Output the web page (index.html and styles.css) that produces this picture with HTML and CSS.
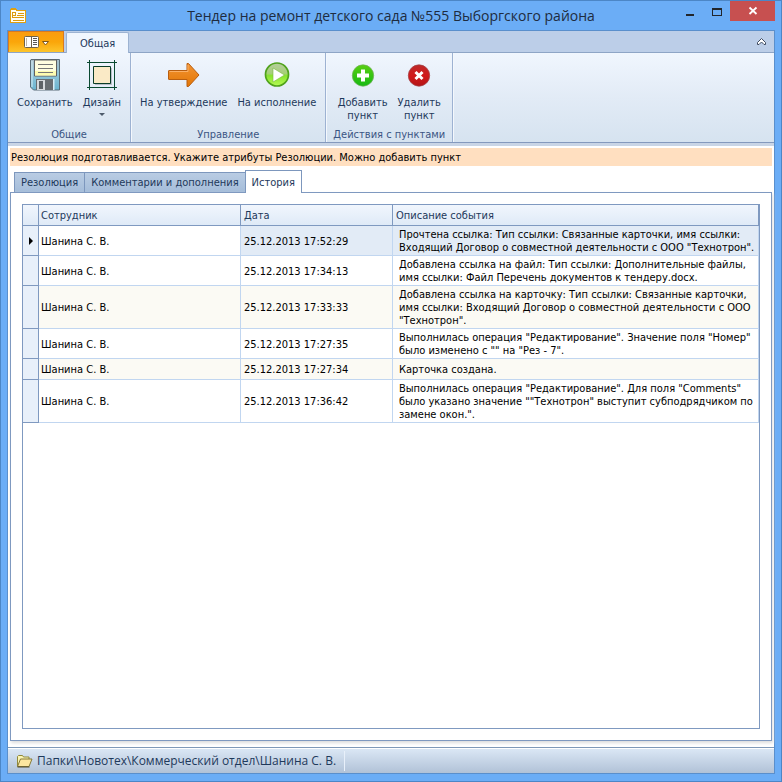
FILE: index.html
```html
<!DOCTYPE html>
<html lang="ru">
<head>
<meta charset="utf-8">
<title>Тендер на ремонт детского сада №555 Выборгского района</title>
<link rel="stylesheet" href="styles.css">
</head>
<body>
<div class="window">
  <header class="titlebar">
    <svg class="app-icon" width="16" height="16" viewBox="0 0 16 16" aria-hidden="true">
      <path d="M0 1h1V0h5v1h1v1h9v13H0z" fill="#dfa010"/>
      <path d="M1 2h5v1h9v11H1z" fill="#fffdf2"/>
      <path d="M2 4h4v4H3v2H2zM3 5v2h2V5zM8 5h6v1H8zM7 7h7v1H7zM3 9h11v1H3zM3 12h11v1H3z" fill="#dd9a0c" fill-rule="evenodd"/>
    </svg>
    <h1 class="title">Тендер на ремонт детского сада №555 Выборгского района</h1>
    <div class="window-buttons">
      <button class="win-btn" type="button" aria-label="Свернуть"><svg width="12" height="12" viewBox="0 0 12 12"><path d="M2 9h8v2H2z" fill="#22262c"/></svg></button>
      <button class="win-btn" type="button" aria-label="Развернуть"><svg width="12" height="12" viewBox="0 0 12 12"><path d="M1 3h10v8H1zM2 5v5h8V5z" fill="#22262c" fill-rule="evenodd"/></svg></button>
      <button class="win-btn win-close" type="button" aria-label="Закрыть"><svg width="12" height="12" viewBox="0 0 12 12"><path d="M2.500 2.500l7 6.500M9.500 2.500l-7 6.500" stroke="#fff" stroke-width="1.800"/></svg></button>
    </div>
  </header>

  <div class="client">
    <nav class="ribbon-tabs">
      <button class="app-menu" type="button" aria-label="Меню">
        <svg width="26" height="14" viewBox="0 0 26 14">
          <rect x="1.500" y="1.500" width="14" height="11" rx="1" fill="#fff" stroke="#6d624c"/>
          <path d="M8.500 2v10" stroke="#6d624c"/>
          <path d="M3 3h1v8H3z" fill="#bdb7aa"/>
          <path d="M10 3.500h4M10 5.500h4M10 7.500h4M10 9.500h4" stroke="#555"/>
          <path d="M19.500 6.500h6l-3 3.500z" fill="#fff" stroke="#80591a"/>
        </svg>
      </button>
      <button class="ribbon-tab" type="button">Общая</button>
      <button class="collapse" type="button" aria-label="Свернуть ленту">
        <svg width="11" height="10" viewBox="0 0 11 10"><path d="M5.500 1.500l4 4v2H8L5.500 5 3 7.500H1.500v-2z" fill="#fff" stroke="#3f4b60"/></svg>
      </button>
    </nav>

    <div class="ribbon">
      <section class="group">
        <div class="group-items">
          <button class="tool" type="button">
            <svg width="32" height="32" viewBox="0 0 32 32">
              <defs><linearGradient id="disk" x2="0" y2="1"><stop stop-color="#a9bdc9"/><stop offset=".5" stop-color="#8fc4d9"/><stop offset="1" stop-color="#6bb5d0"/></linearGradient></defs>
              <path d="M2 .5h28.500V31H4.500L1.500 28V1z" fill="url(#disk)" stroke="#5b6d78"/>
              <path d="M3 2v26" stroke="#d7eef6"/>
              <path d="M5.500 1h22v16h-22z" fill="#fffde0" stroke="#606060"/>
              <path d="M6 12h21v4.500H6z" fill="#fdfbb0"/>
              <path d="M9 5.500h15M9 9.500h15M9 13.500h15" stroke="#777"/>
              <path d="M7 20h17v11H7z" fill="#686e72"/>
              <path d="M8 21h8v10H8z" fill="#d5d9dc"/><path d="M10 22h4v8h-4z" fill="#5d6266"/>
              <path d="M24 20h1.500v11H24z" fill="#d8eef6"/>
            </svg>
            <span>Сохранить</span>
          </button>
          <button class="tool" type="button">
            <svg width="32" height="32" viewBox="0 0 32 32">
              <path d="M3.500 1v30M28.500 1v30M1 3.500h30M1 28.500h30" stroke="#0b4a31"/>
              <path d="M9 9h17v17H9z" fill="#b9bec6"/>
              <path d="M7.500 7.500h17v17h-17z" fill="#faeac6" stroke="#0b3d28"/>
            </svg>
            <span>Дизайн</span>
            <i class="drop"></i>
          </button>
        </div>
        <h2 class="group-title">Общие</h2>
      </section>

      <section class="group">
        <div class="group-items">
          <button class="tool" type="button">
            <svg width="32" height="32" viewBox="0 0 32 32">
              <defs><linearGradient id="arrow" x2="0" y2="1"><stop stop-color="#f39433"/><stop offset="1" stop-color="#e27605"/></linearGradient></defs>
              <path d="M.5 12q0-.5.500-.500h18V4.500h1.500L31 16 20.500 27.500H19v-7H1q-.5 0-.5-.5z" fill="url(#arrow)" stroke="#b85e10"/>
              <path d="M1.500 12.500H20V6" fill="none" stroke="#fbb066"/>
            </svg>
            <span>На утверждение</span>
          </button>
          <button class="tool" type="button">
            <svg width="32" height="32" viewBox="0 0 32 32">
              <defs><linearGradient id="play" x2="0" y2="1"><stop stop-color="#b5cd9c"/><stop offset=".45" stop-color="#a6cf79"/><stop offset=".55" stop-color="#88e32e"/><stop offset="1" stop-color="#b6fa55"/></linearGradient></defs>
              <circle cx="16" cy="15.500" r="11.500" fill="url(#play)" stroke="#4fa21b" stroke-width="1.700"/>
              <path d="M12 9v14l11.500-7z" fill="#fff" stroke="#78b840" stroke-width=".6"/>
            </svg>
            <span>На исполнение</span>
          </button>
        </div>
        <h2 class="group-title">Управление</h2>
      </section>

      <section class="group">
        <div class="group-items">
          <button class="tool" type="button">
            <svg width="32" height="32" viewBox="0 0 32 32">
              <defs><linearGradient id="add" x2="0" y2="1"><stop stop-color="#58cf12"/><stop offset="1" stop-color="#16b914"/></linearGradient></defs>
              <circle cx="16" cy="16.500" r="10.700" fill="url(#add)" stroke="#73ae5a" stroke-width=".7"/>
              <path d="M14 10.500h4v4h4v4h-4v4h-4v-4h-4v-4h4z" fill="#fff"/>
            </svg>
            <span>Добавить<br>пункт</span>
          </button>
          <button class="tool" type="button">
            <svg width="32" height="32" viewBox="0 0 32 32">
              <defs><linearGradient id="del" x2="0" y2="1"><stop stop-color="#bc292a"/><stop offset=".5" stop-color="#d11a1b"/><stop offset="1" stop-color="#b41416"/></linearGradient></defs>
              <circle cx="16" cy="16.500" r="10.700" fill="url(#del)" stroke="#9d4246" stroke-width=".7"/>
              <path d="M12.500 13l7 7M19.500 13l-7 7" stroke="#fff" stroke-width="3"/>
            </svg>
            <span>Удалить<br>пункт</span>
          </button>
        </div>
        <h2 class="group-title">Действия с пунктами</h2>
      </section>
    </div>

    <main class="content">
      <p class="message">Резолюция подготавливается. Укажите атрибуты Резолюции. Можно добавить пункт</p>
      <div class="page-tabs">
        <button class="page-tab" type="button">Резолюция</button>
        <button class="page-tab" type="button">Комментарии и дополнения</button>
        <button class="page-tab active" type="button">История</button>
      </div>
      <div class="panel">
        <div class="grid-box">
          <table class="grid">
            <colgroup><col class="c-mark"><col class="c-name"><col class="c-date"><col></colgroup>
            <thead><tr><th></th><th>Сотрудник</th><th>Дата</th><th>Описание события</th></tr></thead>
            <tbody>
              <tr class="current"><td><i class="marker"></i></td><td>Шанина С. В.</td><td>25.12.2013 17:52:29</td><td>Прочтена ссылка: Тип ссылки: Связанные карточки, имя ссылки:<br>Входящий Договор о совместной деятельности с ООО "Технотрон".</td></tr>
              <tr><td></td><td>Шанина С. В.</td><td>25.12.2013 17:34:13</td><td>Добавлена ссылка на файл: Тип ссылки: Дополнительные файлы,<br>имя ссылки: Файл Перечень документов к тендеру.docx.</td></tr>
              <tr><td></td><td>Шанина С. В.</td><td>25.12.2013 17:33:33</td><td>Добавлена ссылка на карточку: Тип ссылки: Связанные карточки,<br>имя ссылки: Входящий Договор о совместной деятельности с ООО<br>"Технотрон".</td></tr>
              <tr><td></td><td>Шанина С. В.</td><td>25.12.2013 17:27:35</td><td>Выполнилась операция "Редактирование". Значение поля "Номер"<br>было изменено с "" на "Рез - 7".</td></tr>
              <tr class="short"><td></td><td>Шанина С. В.</td><td>25.12.2013 17:27:34</td><td>Карточка создана.</td></tr>
              <tr><td></td><td>Шанина С. В.</td><td>25.12.2013 17:36:42</td><td>Выполнилась операция "Редактирование". Для поля "Comments"<br>было указано значение ""Технотрон" выступит субподрядчиком по<br>замене окон.".</td></tr>
            </tbody>
          </table>
        </div>
      </div>
    </main>

    <footer class="status">
      <svg width="17" height="14" viewBox="0 0 17 14" aria-hidden="true">
        <path d="M1.500 12.500v-10l1-1h4l1 1.500h5.500v2" fill="#fbf5b4" stroke="#91893a"/>
        <path d="M1.500 12.500l3-7.500h11.500l-3 7.500z" fill="#fbe6a0" stroke="#857b38"/>
        <path d="M1.500 13h12" stroke="#504b2c"/>
      </svg>
      <span class="path">Папки\Новотех\Коммерческий отдел\Шанина С. В.</span>
    </footer>
  </div>
</div>
</body>
</html>
```
FILE: styles.css
```css
* { box-sizing: border-box; }

body {
  margin: 0;
  font: 11px/13px Tahoma, "DejaVu Sans Condensed", sans-serif;
  color: #000;
}

button {
  margin: 0;
  padding: 0;
  border: 0;
  background: none;
  font: inherit;
  color: inherit;
}

svg { display: block; flex: none; }

.window {
  display: flex;
  flex-direction: column;
  height: 100vh;
  padding: 0 6px 7px;
  background: #6badf6;
  border: 1px solid #4c86c6;
}

.titlebar {
  display: grid;
  grid-template-columns: 1fr auto 1fr;
  height: 29px;
  flex: none;
}

.app-icon { margin: 7px 0 0 3px; }

.title {
  margin: 3px 0 0;
  font: 14px/24px "Segoe UI", "Open Sans", sans-serif;
  color: #1e2c40;
  white-space: nowrap;
}

.window-buttons {
  display: flex;
  justify-content: flex-end;
  align-items: flex-start;
}

.win-btn {
  display: grid;
  place-items: center;
  width: 27px;
  height: 20px;
}

.win-close { width: 45px; background: #c75050; }

.client {
  display: flex;
  flex-direction: column;
  flex: 1;
  min-height: 0;
  border: 1px solid #5a8fcc;
  background: #fff;
}

.ribbon-tabs {
  display: flex;
  align-items: flex-end;
  gap: 2px;
  height: 22px;
  flex: none;
  background: #bccee8;
  border-bottom: 1px solid #8ea5c6;
  color: #1e395b;
}

.app-menu {
  display: grid;
  place-items: center;
  width: 56px;
  height: 21px;
  border: 1px solid #d97a21;
  border-bottom: 0;
  background: linear-gradient(#fb9c10, #fba60a 50%, #fdc52c);
}

.ribbon-tab {
  height: 21px;
  margin-bottom: -1px;
  padding: 0 13px;
  border: 1px solid #9db3d2;
  border-bottom: 0;
  border-radius: 2px 2px 0 0;
  background: #f0f6fe;
}

.collapse { margin: 0 7px 5px auto; }

.ribbon {
  display: flex;
  height: 90px;
  flex: none;
  background: linear-gradient(#f0f6fe, #e2ebf6 50%, #d6e3f0);
  border-bottom: 1px solid #8499bd;
  color: #1e395b;
}

.group {
  display: flex;
  flex-direction: column;
  justify-content: space-between;
  padding: 6px 4px 1px;
  border-right: 1px solid #9db2d2;
  box-shadow: 1px 0 #f4f8fd;
}

.group-items { display: flex; justify-content: center; }

.tool {
  display: flex;
  flex-direction: column;
  align-items: center;
  padding: 0 5px;
}

.tool span { margin-top: 5px; }

.drop {
  margin-top: 4px;
  border: 3px solid transparent;
  border-top-color: #4d5a6b;
  border-bottom: 0;
}

.group-title {
  margin: 0;
  padding: 0 3px;
  font: inherit;
  text-align: center;
  color: #3b5583;
}

.content {
  display: flex;
  flex-direction: column;
  flex: 1;
  min-height: 0;
  padding: 2px 2px 6px;
  border-top: 3px solid #c9d5e6;
}

.message {
  margin: 0 0 6px;
  padding: 3px 1px 2px;
  background: #ffdfc0;
}

.page-tabs {
  display: flex;
  align-items: flex-end;
  height: 20px;
  padding-left: 4px;
  color: #1e395b;
}

.page-tab {
  height: 20px;
  padding: 0 6px;
  border: 1px solid #7d97bd;
  border-bottom: 0;
  background: linear-gradient(#b9cce3, #a5bdda);
}

.page-tab + .page-tab { margin-left: -1px; }

.page-tab.active {
  z-index: 1;
  height: 23px;
  margin-bottom: -1px;
  background: #fff;
}

.panel {
  display: flex;
  flex: 1;
  min-height: 0;
  padding: 11px;
  border: 1px solid #7f99c0;
  box-shadow: 1px 2px 3px #ddd;
}

.grid-box { flex: 1; border: 1px solid #7f99c0; }

.grid {
  width: 100%;
  border-spacing: 0;
  table-layout: fixed;
}

.c-mark { width: 16px; }
.c-name { width: 202px; }
.c-date { width: 152px; }

.grid th {
  height: 21px;
  padding: 0 3px;
  border: solid #7f99c0;
  border-width: 0 1px 1px 0;
  background: linear-gradient(#f1f6fd, #dfeaf7);
  font-weight: normal;
  text-align: left;
  color: #1e395b;
}

.grid td {
  padding: 2px 3px 1px;
  border: solid #c1d6f0;
  border-width: 0 1px 1px 0;
  white-space: nowrap;
}

.grid td:last-child { padding-left: 6px; }

.grid th:nth-child(2),
.grid td:nth-child(2) { padding-left: 2px; }

.grid td:first-child {
  padding: 0 0 0 6px;
  border-color: #7f99c0;
  background: #e8f0fa;
}

.grid tr:nth-child(odd) td:not(:first-child) { background: #fbfaf4; }
.grid .current td:nth-child(n + 3) { background: #e2ebf6 !important; }
.grid .current td:nth-child(2) { background: #fff !important; }
.grid .short td { height: 21px; }

.marker {
  display: block;
  width: 0;
  border: 4px solid transparent;
  border-left-color: #000;
  border-right: 0;
}

.status {
  display: flex;
  align-items: center;
  gap: 4px;
  height: 26px;
  flex: none;
  padding-left: 8px;
  border-top: 1px solid #7f99b8;
  background: linear-gradient(#dce8f6, #b1c2d7);
  box-shadow: inset 0 1px #fff;
  font: 12px/20px "Segoe UI", "Open Sans", sans-serif;
  color: #1e395b;
}

.path {
  padding-right: 8px;
  border-right: 1px solid #e8f0fa;
}
```
